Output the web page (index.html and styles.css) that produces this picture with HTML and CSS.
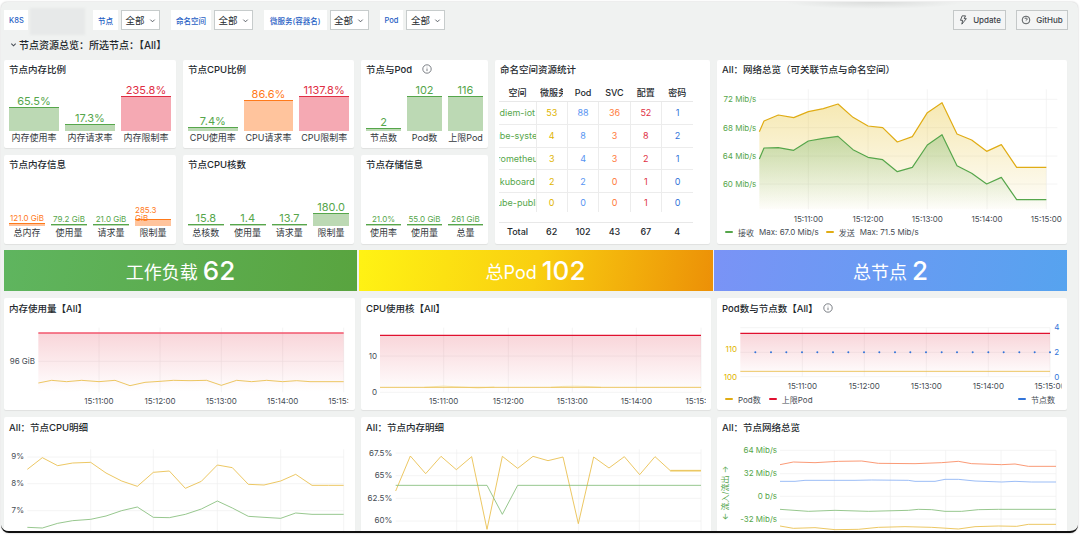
FILE: index.html
```html
<!DOCTYPE html>
<html lang="zh-CN">
<head>
    <meta charset="UTF-8">
    <meta name="viewport" content="width=device-width, initial-scale=1.0">
    <title>K8S 节点资源总览</title>
    <link rel="stylesheet" href="styles.css">
</head>
<body>

<div class="window">
    <div class="toolbar">
        <span class="var-label var-first">K8S</span>
        <span class="blurred"></span>
        <div class="var-group"><span class="var-label">节点</span><span class="var-select">全部 <svg class="chev" viewBox="0 0 8 8"><path d="M1.5 3l2.5 2.5L6.5 3"/></svg></span></div>
        <div class="var-group"><span class="var-label">命名空间</span><span class="var-select">全部 <svg class="chev" viewBox="0 0 8 8"><path d="M1.5 3l2.5 2.5L6.5 3"/></svg></span></div>
        <div class="var-group"><span class="var-label var-wide">微服务(容器名)</span><span class="var-select">全部 <svg class="chev" viewBox="0 0 8 8"><path d="M1.5 3l2.5 2.5L6.5 3"/></svg></span></div>
        <div class="var-group"><span class="var-label">Pod</span><span class="var-select">全部 <svg class="chev" viewBox="0 0 8 8"><path d="M1.5 3l2.5 2.5L6.5 3"/></svg></span></div>
        <div class="toolbar-right">
            <span class="tool-btn btn-update"><svg class="btn-icon" viewBox="0 0 12 12"><path d="M5 1h4L7.4 4.4H10L4.6 11l1-4.6H3z"/></svg>Update</span>
            <span class="tool-btn btn-github"><svg class="btn-icon" viewBox="0 0 12 12"><circle cx="6" cy="6" r="4.6"/><path d="M4.7 4.8a1.3 1.3 0 1 1 1.9 1.2c-.4.2-.6.4-.6.8M6 8.3v.2"/></svg>GitHub</span>
        </div>
    </div>

    <div class="section-row">
        <svg class="chev chev-section" viewBox="0 0 8 8"><path d="M1.5 3l2.5 2.5L6.5 3"/></svg>
        <span>节点资源总览：所选节点：【All】</span>
    </div>

    <div class="top-grid">
        <div class="panel">
            <div class="panel-title">节点内存比例</div>
            <div class="gauges">
                <div class="gauge"><div class="gauge-value">65.5%</div><div class="gauge-bar" style="height:23px"></div><div class="gauge-label">内存使用率</div></div>
                <div class="gauge"><div class="gauge-value">17.3%</div><div class="gauge-bar" style="height:6px"></div><div class="gauge-label">内存请求率</div></div>
                <div class="gauge red"><div class="gauge-value">235.8%</div><div class="gauge-bar" style="height:34px"></div><div class="gauge-label">内存限制率</div></div>
            </div>
        </div>
        <div class="panel">
            <div class="panel-title">节点CPU比例</div>
            <div class="gauges">
                <div class="gauge"><div class="gauge-value">7.4%</div><div class="gauge-bar" style="height:3px"></div><div class="gauge-label">CPU使用率</div></div>
                <div class="gauge orange"><div class="gauge-value">86.6%</div><div class="gauge-bar" style="height:30px"></div><div class="gauge-label">CPU请求率</div></div>
                <div class="gauge red"><div class="gauge-value">1137.8%</div><div class="gauge-bar" style="height:34px"></div><div class="gauge-label">CPU限制率</div></div>
            </div>
        </div>
        <div class="panel">
            <div class="panel-title">节点与Pod <svg class="info-icon" viewBox="0 0 10 10"><circle cx="5" cy="5" r="4.2"/><path d="M5 4.5v2.6M5 2.8v.5"/></svg></div>
            <div class="gauges">
                <div class="gauge"><div class="gauge-value">2</div><div class="gauge-bar" style="height:2px"></div><div class="gauge-label">节点数</div></div>
                <div class="gauge"><div class="gauge-value">102</div><div class="gauge-bar" style="height:34px"></div><div class="gauge-label">Pod数</div></div>
                <div class="gauge"><div class="gauge-value">116</div><div class="gauge-bar" style="height:34px"></div><div class="gauge-label">上限Pod</div></div>
            </div>
        </div>

        <div class="panel panel-tall">
            <div class="panel-title">命名空间资源统计</div>
            <table class="ns-table">
                <thead>
                    <tr><th>空间</th><th><div class="ns-clip">微服务数</div></th><th>Pod</th><th>SVC</th><th>配置</th><th>密码</th></tr>
                </thead>
                <tbody>
                    <tr><td class="c-green"><div class="ns-name"><span>diem-iot</span></div></td><td class="c-yellow">53</td><td class="c-blue">88</td><td class="c-orange">36</td><td class="c-red">52</td><td class="c-navy">1</td></tr>
                    <tr><td class="c-green"><div class="ns-name"><span>kube-system</span></div></td><td class="c-yellow">4</td><td class="c-blue">8</td><td class="c-orange">3</td><td class="c-red">8</td><td class="c-navy">2</td></tr>
                    <tr><td class="c-green"><div class="ns-name"><span>prometheus</span></div></td><td class="c-yellow">3</td><td class="c-blue">4</td><td class="c-orange">3</td><td class="c-red">2</td><td class="c-navy">1</td></tr>
                    <tr><td class="c-green"><div class="ns-name"><span>kuboard</span></div></td><td class="c-yellow">2</td><td class="c-blue">2</td><td class="c-orange">0</td><td class="c-red">1</td><td class="c-navy">0</td></tr>
                    <tr><td class="c-green"><div class="ns-name"><span>kube-public</span></div></td><td class="c-yellow">0</td><td class="c-blue">0</td><td class="c-orange">0</td><td class="c-red">1</td><td class="c-navy">0</td></tr>
                </tbody>
                <tfoot>
                    <tr><td>Total</td><td>62</td><td>102</td><td>43</td><td>67</td><td>4</td></tr>
                </tfoot>
            </table>
        </div>

        <div class="panel panel-tall">
            <div class="panel-title">All：网络总览（可关联节点与命名空间）</div>
            <svg class="chart" width="350" height="145" viewBox="6 60 1050 435">
                <defs>
                    <linearGradient id="netYellow" gradientUnits="userSpaceOnUse" x1="0" y1="128" x2="0" y2="448"><stop offset="0" stop-color="#e0b400" stop-opacity=".3"/><stop offset="1" stop-color="#e0b400" stop-opacity=".02"/></linearGradient>
                    <linearGradient id="netGreen" gradientUnits="userSpaceOnUse" x1="0" y1="224" x2="0" y2="448"><stop offset="0" stop-color="#56a64b" stop-opacity=".32"/><stop offset="1" stop-color="#56a64b" stop-opacity="0"/></linearGradient>
                </defs>
                <path class="grid-line" d="M280 88V448M459 88V448M637 88V448M816 88V448M994 88V448M133 118H1027M133 203H1027M133 288H1027M133 372H1027"/>
                <polygon fill="url(#netYellow)" points="133,215 147,183 190,165 236,173 280,155 325,146 369,132 414,172 459,198 503,203 547,246 592,230 637,158 681,128 726,222 770,240 815,274 859,254 905,322 950,322 994,322 994,448 133,448"/>
                <polygon fill="url(#netGreen)" points="133,297 147,264 190,263 236,271 280,243 325,235 369,229 414,269 459,292 503,299 547,335 592,322 637,255 681,224 726,317 770,340 815,372 859,352 905,419 950,419 994,419 994,448 133,448"/>
                <polyline class="line line-bold s-yellow" points="133,215 147,183 190,165 236,173 280,155 325,146 369,132 414,172 459,198 503,203 547,246 592,230 637,158 681,128 726,222 770,240 815,274 859,254 905,322 950,322 994,322"/>
                <polyline class="line line-bold s-green" points="133,297 147,264 190,263 236,271 280,243 325,235 369,229 414,269 459,292 503,299 547,335 592,322 637,255 681,224 726,317 770,340 815,372 859,352 905,419 950,419 994,419"/>
                <g class="axis axis-green axis-end">
                    <text x="124" y="118">72 Mib/s</text><text x="124" y="203">68 Mib/s</text><text x="124" y="287">64 Mib/s</text><text x="124" y="372">60 Mib/s</text>
                </g>
                <g class="axis axis-mid">
                    <text x="280" y="478">15:11:00</text><text x="459" y="478">15:12:00</text><text x="637" y="478">15:13:00</text><text x="816" y="478">15:14:00</text><text x="994" y="478">15:15:00</text>
                </g>
            </svg>
            <div class="legend">
                <i class="legend-key k-green"></i><span>接收</span><span class="legend-max">Max: 67.0 Mib/s</span>
                <i class="legend-key k-yellow"></i><span>发送</span><span class="legend-max">Max: 71.5 Mib/s</span>
            </div>
        </div>

        <div class="panel">
            <div class="panel-title">节点内存信息</div>
            <div class="gauges gauges-small">
                <div class="gauge orange thin"><div class="gauge-value">121.0 GiB</div><div class="gauge-bar" style="height:2px"></div><div class="gauge-label">总内存</div></div>
                <div class="gauge thin"><div class="gauge-value">79.2 GiB</div><div class="gauge-bar" style="height:1px"></div><div class="gauge-label">使用量</div></div>
                <div class="gauge thin"><div class="gauge-value">21.0 GiB</div><div class="gauge-bar" style="height:1px"></div><div class="gauge-label">请求量</div></div>
                <div class="gauge orange thin wrap"><div class="gauge-value">285.3 GiB</div><div class="gauge-bar" style="height:6px"></div><div class="gauge-label">限制量</div></div>
            </div>
        </div>
        <div class="panel">
            <div class="panel-title">节点CPU核数</div>
            <div class="gauges gauges-small">
                <div class="gauge"><div class="gauge-value">15.8</div><div class="gauge-bar" style="height:1px"></div><div class="gauge-label">总核数</div></div>
                <div class="gauge"><div class="gauge-value">1.4</div><div class="gauge-bar" style="height:1px"></div><div class="gauge-label">使用量</div></div>
                <div class="gauge"><div class="gauge-value">13.7</div><div class="gauge-bar" style="height:1px"></div><div class="gauge-label">请求量</div></div>
                <div class="gauge"><div class="gauge-value">180.0</div><div class="gauge-bar" style="height:12px"></div><div class="gauge-label">限制量</div></div>
            </div>
        </div>
        <div class="panel">
            <div class="panel-title">节点存储信息</div>
            <div class="gauges gauges-small">
                <div class="gauge thin"><div class="gauge-value">21.0%</div><div class="gauge-bar" style="height:1px"></div><div class="gauge-label">使用率</div></div>
                <div class="gauge thin"><div class="gauge-value">55.0 GiB</div><div class="gauge-bar" style="height:1px"></div><div class="gauge-label">使用量</div></div>
                <div class="gauge thin"><div class="gauge-value">261 GiB</div><div class="gauge-bar" style="height:1px"></div><div class="gauge-label">总量</div></div>
            </div>
        </div>
    </div>

    <div class="stats">
        <div class="stat stat-green">工作负载 <b>62</b></div>
        <div class="stat stat-yellow">总Pod <b>102</b></div>
        <div class="stat stat-blue">总节点 <b>2</b></div>
    </div>

    <div class="chart-grid">
        <div class="panel">
            <div class="panel-title">内存使用量【All】</div>
            <svg class="chart" width="351" height="90" viewBox="12 75 1053 270">
                <defs>
                    <linearGradient id="memRed" x1="0" y1="0" x2="0" y2="1"><stop offset="0" stop-color="#e02f44" stop-opacity=".2"/><stop offset="1" stop-color="#e02f44" stop-opacity="0"/></linearGradient>
                    <clipPath id="memClip"><rect x="12" y="75" width="1033" height="270"/></clipPath>
                </defs>
                <path class="grid-line" d="M297 98V292M480 98V292M664 98V292M848 98V292M1031 98V292M115 199H1031"/>
                <rect x="115" y="114" width="916" height="176" fill="url(#memRed)"/>
                <path class="line s-rose line-heavy" d="M115 114H1031"/>
                <polyline class="line s-yellow" points="115,264 155,256 200,260 245,256 297,260 345,256 390,272 435,262 480,259 520,256 570,257 620,256 664,271 710,256 755,260 800,256 848,260 890,257 930,260 1031,260"/>
                <g class="axis axis-end"><text x="105" y="199">96 GiB</text></g>
                <g class="axis axis-mid" clip-path="url(#memClip)">
                    <text x="297" y="318">15:11:00</text><text x="480" y="318">15:12:00</text><text x="664" y="318">15:13:00</text><text x="848" y="318">15:14:00</text><text x="1031" y="318">15:15:00</text>
                </g>
            </svg>
        </div>
        <div class="panel">
            <div class="panel-title">CPU使用核【All】</div>
            <svg class="chart" width="350" height="90" viewBox="0 75 1050 270">
                <defs>
                    <linearGradient id="cpuRed" x1="0" y1="0" x2="0" y2="1"><stop offset="0" stop-color="#e02f44" stop-opacity=".2"/><stop offset="1" stop-color="#e02f44" stop-opacity="0"/></linearGradient>
                    <clipPath id="cpuClip"><rect x="0" y="75" width="1035" height="270"/></clipPath>
                </defs>
                <path class="grid-line" d="M248 98V292M442 98V292M634 98V292M826 98V292M1020 98V292M57 183H1020M57 292H1020"/>
                <rect x="57" y="121" width="963" height="171" fill="url(#cpuRed)"/>
                <path class="line s-red" d="M57 121H1020"/>
                <path class="line s-pale" d="M190 277Q248 270 300 276T400 276M570 277Q634 270 720 277"/>
                <path class="line s-yellow" d="M57 277H1020"/>
                <g class="axis axis-end"><text x="48" y="183">10</text><text x="48" y="290">0</text></g>
                <g class="axis axis-mid" clip-path="url(#cpuClip)">
                    <text x="248" y="318">15:11:00</text><text x="442" y="318">15:12:00</text><text x="634" y="318">15:13:00</text><text x="826" y="318">15:14:00</text><text x="1020" y="318">15:15:00</text>
                </g>
            </svg>
        </div>
        <div class="panel">
            <div class="panel-title">Pod数与节点数【All】 <svg class="info-icon info-wide" viewBox="0 0 10 10"><circle cx="5" cy="5" r="4.2"/><path d="M5 4.5v2.6M5 2.8v.5"/></svg></div>
            <svg class="chart" width="350" height="70" viewBox="6 75 1050 210">
                <defs>
                    <linearGradient id="podRed" x1="0" y1="0" x2="0" y2="1"><stop offset="0" stop-color="#e02f44" stop-opacity=".2"/><stop offset="1" stop-color="#e02f44" stop-opacity="0"/></linearGradient>
                    <clipPath id="podClip"><rect x="6" y="75" width="1034" height="210"/></clipPath>
                </defs>
                <path class="grid-line" d="M262 98V245M448 98V245M634 98V245M820 98V245M1005 98V245M76 98H1005M76 172H1005M76 245H1005"/>
                <rect x="76" y="115" width="929" height="130" fill="url(#podRed)"/>
                <path class="line s-red" d="M76 115H1005"/>
                <path class="line s-yellow" d="M76 229H1005"/>
                <g class="dots">
                    <circle cx="121" cy="172" r="3"/><circle cx="168" cy="172" r="3"/><circle cx="214" cy="172" r="3"/><circle cx="261" cy="172" r="3"/><circle cx="307" cy="172" r="3"/><circle cx="354" cy="172" r="3"/><circle cx="400" cy="172" r="3"/><circle cx="447" cy="172" r="3"/><circle cx="493" cy="172" r="3"/><circle cx="540" cy="172" r="3"/><circle cx="586" cy="172" r="3"/><circle cx="633" cy="172" r="3"/><circle cx="680" cy="172" r="3"/><circle cx="726" cy="172" r="3"/><circle cx="773" cy="172" r="3"/><circle cx="820" cy="172" r="3"/><circle cx="866" cy="172" r="3"/><circle cx="913" cy="172" r="3"/><circle cx="959" cy="172" r="3"/><circle cx="1005" cy="172" r="3"/>
                </g>
                <g class="axis axis-yellow axis-end"><text x="66" y="162">110</text><text x="66" y="246">100</text></g>
                <g class="axis axis-navy"><text x="1018" y="97">4</text><text x="1018" y="171">2</text><text x="1018" y="245">0</text></g>
                <g class="axis axis-mid" clip-path="url(#podClip)">
                    <text x="262" y="274">15:11:00</text><text x="448" y="274">15:12:00</text><text x="634" y="274">15:13:00</text><text x="820" y="274">15:14:00</text><text x="1005" y="274">15:15:00</text>
                </g>
            </svg>
            <div class="legend legend-pod">
                <i class="legend-key k-yellow"></i><span>Pod数</span>
                <i class="legend-key k-red"></i><span>上限Pod</span>
                <i class="legend-key k-navy legend-push"></i><span>节点数</span>
            </div>
        </div>

        <div class="panel">
            <div class="panel-title">All：节点CPU明细</div>
            <svg class="chart" width="351" height="95" viewBox="12 66 1053 285">
                <path class="grid-line" d="M272 97V351M460 97V351M652 97V351M842 97V351M1031 97V351M82 120H1031M82 200H1031M82 281H1031"/>
                <polyline class="line s-yellow" points="82,157 127,122 173,146 218,138 272,136 318,168 365,192 412,208 460,166 508,162 556,214 604,193 652,144 697,152 745,202 792,204 842,192 887,172 936,205 985,205 1031,205"/>
                <polyline class="line s-green2" points="82,331 127,333 173,319 218,311 272,307 318,297 365,281 412,270 460,301 508,302 556,292 604,276 652,252 697,273 745,298 792,301 842,304 887,288 936,292 1031,292"/>
                <g class="axis axis-end"><text x="72" y="118">9%</text><text x="72" y="198">8%</text><text x="72" y="280">7%</text></g>
            </svg>
        </div>
        <div class="panel">
            <div class="panel-title">All：节点内存明细</div>
            <svg class="chart" width="350" height="95" viewBox="0 66 1050 285">
                <path class="grid-line" d="M287 97V351M470 97V351M653 97V351M835 97V351M1020 97V351M104 108H1020M104 176H1020M104 244H1020M104 312H1020"/>
                <path class="line s-pale line-thick" d="M928 161H1020"/>
                <polyline class="line s-yellow" points="104,222 148,117 194,170 240,118 286,158 332,119 378,337 424,118 470,154 516,118 561,131 606,120 652,320 698,120 744,153 790,119 836,173 882,119 928,161 1020,161"/>
                <polyline class="line s-green2" points="104,205 378,205 424,292 470,205 1020,205"/>
                <g class="axis axis-end"><text x="94" y="107">67.5%</text><text x="94" y="175">65%</text><text x="94" y="243">62.5%</text><text x="94" y="310">60%</text></g>
            </svg>
        </div>
        <div class="panel">
            <div class="panel-title">All：节点网络总览</div>
            <svg class="chart" width="350" height="95" viewBox="6 66 1050 285">
                <path class="grid-line" d="M358 100V351M526 100V351M692 100V351M858 100V351M1023 100V351M195 100H1023M195 170H1023M195 238H1023M195 306H1023"/>
                <polyline class="line s-orange" points="195,143 235,135 300,137 370,133 440,132 490,139 600,140 680,137 730,133 770,140 860,143 900,141 940,148 1023,148"/>
                <polyline class="line s-blue" points="195,193 240,193 270,190 420,190 470,189 580,190 600,193 660,193 690,187 730,187 780,192 860,195 900,193 950,195 1023,195"/>
                <polyline class="line s-green2" points="195,277 280,283 360,280 460,283 580,280 610,277 650,278 690,283 740,283 790,278 850,277 1023,277"/>
                <polyline class="line s-yellow" points="195,327 235,334 300,332 360,338 430,337 490,331 570,329 650,331 730,336 780,329 850,327 905,328 940,322 1023,322"/>
                <g class="axis axis-green axis-end"><text x="186" y="100">64 Mib/s</text><text x="186" y="169">32 Mib/s</text><text x="186" y="238">0 b/s</text><text x="186" y="306">-32 Mib/s</text></g>
                <text class="axis axis-green axis-mid" transform="translate(31 228) rotate(-90)">← 流入/流出 →</text>
            </svg>
        </div>
    </div>
</div>

</body>
</html>
```

FILE: styles.css
```css
html, body {
    margin: 0;
    padding: 0;
    background-color: #fff;
}
body {
    font-family: Inter, "Noto Sans CJK SC", sans-serif;
    color: #24292e;
    height: 537px;
    overflow: hidden;
}
.window {
    box-sizing: border-box;
    width: 1077px;
    height: 531px;
    margin: 2px 0 0 1px;
    padding: 0 0 0 3px;
    overflow: hidden;
    background-color: #f0f2f1;
    border-bottom: 2px solid #111;
    border-radius: 6px 6px 8px 8px;
    box-shadow: 0 0 2px rgba(0, 0, 0, 0.25);
}

/* top bar */
.toolbar {
    display: flex;
    align-items: flex-start;
    height: 30px;
    padding: 6px 10px 0 0;
    box-sizing: border-box;
    background: radial-gradient(ellipse 90px 7px at 870px 0, rgba(0, 0, 0, 0.09), transparent);
}
.var-group {
    display: flex;
    gap: 3px;
    margin-right: 11px;
    margin-top: 2px;
}
.var-label {
    display: flex;
    align-items: center;
    height: 20px;
    padding: 0 5px;
    background-color: #fff;
    color: #1f60c4;
    font-size: 7.5px;
    font-weight: 500;
    white-space: nowrap;
}
.var-wide {
    padding: 0 6px;
}
.var-first {
    margin-top: 2px;
    width: 14px;
    padding: 0 5px;
}
.blurred {
    width: 55px;
    height: 27px;
    margin: 0 8px 0 2px;
    background-color: #e7e9e9;
    filter: blur(1px);
}
.var-select {
    display: flex;
    align-items: center;
    justify-content: center;
    gap: 4px;
    box-sizing: border-box;
    width: 39px;
    height: 20px;
    background-color: #fff;
    border: 1px solid #c7cccc;
    font-size: 9.5px;
}
.chev {
    width: 7px;
    height: 7px;
    fill: none;
    stroke: #464c54;
    stroke-width: 1;
}
.toolbar-right {
    display: flex;
    gap: 10px;
    margin: 2px 0 0 auto;
}
.tool-btn {
    display: flex;
    align-items: center;
    justify-content: center;
    gap: 5px;
    box-sizing: border-box;
    height: 20px;
    background-color: #f4f5f5;
    border: 1px solid #c4c8c8;
    font-size: 8px;
    font-weight: 500;
    color: #3c4248;
}
.btn-update { width: 53px; }
.btn-github { width: 52px; }
.btn-icon {
    width: 10px;
    height: 10px;
    fill: none;
    stroke: #24292e;
    stroke-width: 0.9;
}
.section-row {
    display: flex;
    align-items: center;
    gap: 2px;
    box-sizing: border-box;
    height: 28px;
    padding: 0 0 4px 6px;
    font-size: 10px;
    font-weight: 500;
}
.chev-section {
    width: 7px;
    height: 7px;
    stroke-width: 1.2;
}

/* panels */
.top-grid {
    display: grid;
    grid-template-columns: 172px 171px 127px 215px 350px;
    grid-template-rows: 88px 89px;
    gap: 7px;
}
.panel {
    display: flex;
    flex-direction: column;
    min-width: 0;
    overflow: hidden;
    background-color: #fff;
    border-radius: 2px;
    box-shadow: 0 1px 1px rgba(0, 0, 0, 0.07);
}
.panel-tall {
    grid-row: span 2;
    grid-column-start: auto;
}
.panel-title {
    display: flex;
    align-items: center;
    flex: none;
    box-sizing: border-box;
    height: 20px;
    padding: 0 5px 2px;
    font-size: 9.5px;
    font-weight: 500;
    white-space: nowrap;
}
.info-icon {
    width: 10px;
    height: 10px;
    margin-left: 10px;
    fill: none;
    stroke: #464c54;
    stroke-width: 0.7;
}
.info-wide {
    margin-left: 5px;
}

/* bar gauges */
.gauges {
    display: flex;
    flex: 1;
    gap: 6px;
    padding: 0 5px 3px;
}
.gauges-small {
    padding-bottom: 4px;
}
.gauge {
    display: flex;
    flex: 1;
    min-width: 0;
    flex-direction: column;
    justify-content: flex-end;
    text-align: center;
    --bar: #56a64b;
    --fill: #bcd9b4;
}
.gauge.red {
    --bar: #e02f44;
    --fill: #f5a9b3;
}
.gauge.orange {
    --bar: #ff7a1a;
    --fill: #ffc49d;
}
.gauge-value {
    color: var(--bar);
    font-size: 11px;
    line-height: 11px;
    white-space: nowrap;
}
.gauge.thin .gauge-value {
    font-size: 8px;
    line-height: 8px;
    margin-bottom: 1px;
}
.gauge.wrap .gauge-value {
    position: relative;
    white-space: normal;
    text-align: left;
    margin-bottom: -3px;
}
.gauge-bar {
    background-color: var(--fill);
    border-top: 1px solid var(--bar);
}
.gauge-label {
    font-size: 9px;
    line-height: 14px;
    white-space: nowrap;
    color: #33383d;
}

/* namespace table */
.ns-table {
    table-layout: fixed;
    width: 194px;
    margin: 3px 0 0 4px;
    border-collapse: collapse;
    font-size: 9px;
    text-align: center;
}
.ns-table th {
    height: 18px;
    padding: 0;
    font-weight: 500;
    border-bottom: 1px solid #e8e8e8;
}
.ns-table th:first-child {
    width: 37px;
}
.ns-table td {
    height: 21.8px;
    padding: 0;
    border-bottom: 1px solid #ececec;
}
.ns-table tbody td + td {
    border-left: 1px solid #ececec;
}
.ns-table tbody tr:last-child td {
    height: 19px;
    border-bottom: none;
}
.ns-table tfoot td {
    height: 17px;
    border-top: 1px solid #e8e8e8;
    border-bottom: none;
    font-weight: 500;
}
.ns-table tfoot::before {
    content: "";
    display: table-row;
    height: 10px;
}
.ns-name {
    display: flex;
    justify-content: center;
    overflow: hidden;
    white-space: nowrap;
}
.ns-clip {
    margin: 0 4px;
    overflow: hidden;
    white-space: nowrap;
    text-align: left;
}
.c-green { color: #56a64b; }
.c-yellow { color: #e0b400; }
.c-blue { color: #5794f2; }
.c-orange { color: #ff7a3a; }
.c-red { color: #e02f44; }
.c-navy { color: #3274d9; }

/* stat banners */
.stats {
    display: grid;
    grid-template-columns: 353px 354px 353px;
    gap: 1.5px;
    height: 41px;
    margin-top: 6px;
}
.stat {
    display: flex;
    align-items: center;
    justify-content: center;
    color: #fff;
    font-size: 18px;
    white-space: pre;
}
.stat b {
    font-size: 26px;
    font-weight: 500;
}
.stat-green { background: linear-gradient(100deg, #5fb55f, #59a43f); }
.stat-yellow { background: linear-gradient(100deg, #fff314, #f9cf10 50%, #ec9007); }
.stat-blue { background: linear-gradient(100deg, #7a93f6, #56a3ef); }

/* time series */
.chart-grid {
    display: grid;
    grid-template-columns: 351px 350px 350px;
    grid-template-rows: 112px 116px;
    gap: 7px 6px;
    margin-top: 7px;
}
.chart {
    display: block;
    flex: none;
}
.chart-grid .panel-title {
    height: 22px;
}
.grid-line {
    fill: none;
    stroke: #efefef;
    stroke-width: 2;
}
.line {
    fill: none;
    stroke-width: 2.6;
    stroke-linejoin: round;
}
.line-bold { stroke-width: 3.6; }
.line-heavy { stroke-width: 5; }
.line-thick { stroke-width: 6; }
.s-yellow { stroke: #e9be4a; }
.line-bold.s-yellow { stroke: #e0ac14; }
.s-green { stroke: #56a64b; }
.s-green2 { stroke: #86be7c; }
.s-red { stroke: #e0102f; stroke-width: 3.6; }
.s-rose { stroke: #f2566c; }
.s-orange { stroke: #f98a60; }
.s-blue { stroke: #8cb2f5; }
.s-pale { stroke: #f4e3a9; }
.dots { fill: #3274d9; }
.axis {
    fill: #464c54;
    font-size: 24px;
    dominant-baseline: central;
}
.axis-mid { text-anchor: middle; }
.axis-end { text-anchor: end; }
.axis-green { fill: #56a64b; }
.axis-yellow { fill: #e0b400; }
.axis-navy { fill: #3274d9; }

/* legends */
.legend {
    display: flex;
    align-items: center;
    height: 14px;
    padding: 0 12px 0 8px;
    font-size: 8px;
    color: #464c54;
    white-space: nowrap;
}
.legend-pod {
    height: 18px;
}
.legend-pod span {
    margin-right: 8px;
}
.legend-pod span:last-child {
    margin-right: 0;
}
.legend-key {
    flex: none;
    width: 8px;
    height: 2px;
    margin-right: 5px;
    border-radius: 1px;
}
.legend-max {
    margin: 0 7px 0 5px;
}
.legend-push {
    margin-left: auto;
}
.k-green { background-color: #56a64b; }
.k-yellow { background-color: #e0ac14; }
.k-red { background-color: #e0102f; }
.k-navy { background-color: #3274d9; }
```
